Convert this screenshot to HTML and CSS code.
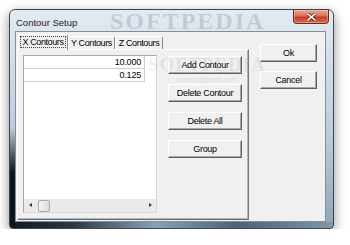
FILE: index.html
```html
<!DOCTYPE html>
<html lang="en">
<head>
  <meta charset="UTF-8">
  <title>Contour Setup</title>
  <link rel="stylesheet" href="styles.css">
</head>
<body>
  <div class="window">
    <div class="titlebar">
      <span class="title">Contour Setup</span>
      <span class="mark-title">SOFTPEDIA</span>
      <button class="close" aria-label="Close">
        <svg width="9" height="8" viewBox="0 0 9 8">
          <path d="M1 1 L8 7 M8 1 L1 7" stroke="#4a1a12" stroke-width="3" stroke-linecap="square"/>
          <path d="M1 1 L8 7 M8 1 L1 7" stroke="#ffffff" stroke-width="1.6" stroke-linecap="square"/>
        </svg>
      </button>
    </div>
    <div class="client">
      <div class="tabs">
        <div class="tab-strip">
          <div class="tab active"><span class="focus">X Contours</span></div>
          <div class="tab tab-y">Y Contours</div>
          <div class="tab tab-z">Z Contours</div>
        </div>
        <div class="tab-panel">
          <div class="list">
            <div class="rows">
              <div class="row">10.000</div>
              <div class="row">0.125</div>
            </div>
            <div class="hscroll">
              <span class="arrow left"></span>
              <span class="thumb"></span>
              <span class="track"></span>
              <span class="arrow right"></span>
            </div>
          </div>
          <div class="actions">
            <button class="btn">Add Contour</button>
            <button class="btn">Delete Contour</button>
            <button class="btn">Delete All</button>
            <button class="btn">Group</button>
          </div>
        </div>
      </div>
      <div class="dialog-buttons">
        <button class="btn small">Ok</button>
        <button class="btn small">Cancel</button>
      </div>
      <div class="mark-client">
        <span class="mark-big">SOFTPEDIA</span>
        <span class="mark-url">www.softpedia.com</span>
      </div>
    </div>
  </div>
</body>
</html>
```

FILE: styles.css
```css
body {
  margin: 0;
  background-color: #ffffff;
  font-family: "Liberation Sans", Arial, sans-serif;
}
.window {
  box-sizing: border-box;
  width: 325px;
  height: 220px;
  margin: 9px 0 0 9px;
  padding: 0 7px 6px 5px;
  border: 1px solid #3d4752;
  border-radius: 6px 6px 4px 4px;
  box-shadow: 0 4px 12px rgba(0, 0, 0, 0.45);
  background:
    linear-gradient(to bottom, rgba(10, 12, 16, 0), #101418 45%) left bottom / 5px 100px no-repeat,
    linear-gradient(to right, #14181d 0, #2e3a46 20%, #8aa1b5 45%, #4d6275 70%, #7f95a8 100%) left bottom / 100% 6px no-repeat,
    linear-gradient(to bottom, #e4eaf0 0, #d6dfe8 20%, #bccad7 60%, #8fa4b7 100%);
}
.titlebar {
  position: relative;
  display: flex;
  align-items: flex-start;
  height: 21px;
}
.title {
  padding: 7px 0 0 1px;
  font-size: 9.5px;
  color: #1b1b1b;
}
.mark-title {
  position: absolute;
  left: 95px;
  top: -2px;
  font-family: "Liberation Serif", serif;
  font-weight: bold;
  font-size: 24px;
  letter-spacing: 2px;
  color: rgba(80, 102, 125, 0.22);
}
.close {
  display: flex;
  align-items: center;
  justify-content: center;
  width: 36px;
  height: 14px;
  margin: 0 -3px 0 auto;
  padding: 0;
  border: 1px solid #6a2c20;
  border-top: none;
  border-radius: 0 0 4px 4px;
  background: linear-gradient(to bottom, #e9a99a 0, #d7705a 45%, #c0402a 55%, #d56a4c 100%);
  box-shadow: inset 0 0 0 1px rgba(255, 200, 190, 0.45);
}
.client {
  position: relative;
  box-sizing: border-box;
  display: flex;
  height: 191px;
  padding: 2px 0 0 1px;
  border: 1px solid #7e8f9f;
  background-color: #f0f0f0;
}
.tabs {
  display: flex;
  flex-direction: column;
  width: 232px;
}
.tab-strip {
  display: flex;
  align-items: flex-end;
  height: 15px;
  padding-left: 1px;
}
.tab {
  box-sizing: border-box;
  height: 13px;
  border-top: 1px solid #ffffff;
  border-left: 1px solid #ffffff;
  border-right: 1px solid #8a8a8a;
  border-radius: 2px 2px 0 0;
  font-size: 9px;
  letter-spacing: -0.4px;
  line-height: 12px;
  text-align: center;
  color: #000000;
}
.tab.active {
  position: relative;
  width: 50px;
  height: 16px;
  margin-bottom: -1px;
  padding-top: 1px;
  background-color: #f0f0f0;
}
.focus {
  padding: 0 1px;
  outline: 1px dotted #444444;
  outline-offset: 0;
}
.tab-y {
  width: 47px;
}
.tab-z {
  width: 48px;
}
.tab-panel {
  box-sizing: border-box;
  display: flex;
  height: 171px;
  padding: 5px 0 0 5px;
  border-top: 1px solid #ffffff;
  border-left: 1px solid #ffffff;
  border-right: 1px solid #7a7a7a;
  border-bottom: 1px solid #6a6a6a;
  box-shadow: inset -1px -1px 0 #b4b4b4;
}
.list {
  box-sizing: border-box;
  display: flex;
  flex-direction: column;
  width: 134px;
  height: 158px;
  border: 1px solid #a7a7a7;
  border-right-color: #d8d8d8;
  border-bottom-color: #d8d8d8;
  background-color: #ffffff;
}
.rows {
  flex: 1;
}
.row {
  box-sizing: border-box;
  width: 121px;
  height: 13px;
  padding-right: 3px;
  border-bottom: 1px solid #cfcfcf;
  border-right: 1px solid #cfcfcf;
  font-size: 9px;
  line-height: 13px;
  text-align: right;
  letter-spacing: -0.2px;
}
.hscroll {
  display: flex;
  align-items: center;
  height: 13px;
  background-color: #eaeaea;
}
.arrow {
  width: 13px;
  height: 13px;
  position: relative;
}
.arrow::after {
  content: "";
  position: absolute;
  top: 4px;
  border-top: 2.5px solid transparent;
  border-bottom: 2.5px solid transparent;
}
.arrow.left::after {
  left: 5px;
  border-right: 3px solid #3a3a3a;
}
.arrow.right::after {
  left: 6px;
  border-left: 3px solid #3a3a3a;
}
.thumb {
  box-sizing: border-box;
  width: 12px;
  height: 12px;
  margin-left: 1px;
  border: 1px solid #a9a9a9;
  border-radius: 2px;
  background: linear-gradient(to right, #f6f6f6, #dcdcdc);
}
.track {
  flex: 1;
}
.actions {
  display: flex;
  flex-direction: column;
  gap: 10px;
  width: 74px;
  margin-left: 11px;
  padding-top: 1px;
}
.btn {
  box-sizing: border-box;
  height: 18px;
  padding: 0;
  border: 1px solid;
  border-color: #ffffff #5f5f5f #5f5f5f #ffffff;
  box-shadow: inset -1px -1px 0 #a8a8a8;
  background-color: #f0f0f0;
  font-family: "Liberation Sans", Arial, sans-serif;
  font-size: 9px;
  letter-spacing: -0.3px;
  color: #000000;
}
.dialog-buttons {
  display: flex;
  flex-direction: column;
  gap: 9px;
  width: 57px;
  margin-left: 11px;
  padding-top: 10px;
}
.mark-client {
  position: absolute;
  left: 132px;
  top: 22px;
  display: flex;
  flex-direction: column;
  align-items: center;
  pointer-events: none;
}
.mark-big {
  font-family: "Liberation Serif", serif;
  font-weight: bold;
  font-size: 19px;
  letter-spacing: 1px;
  color: rgba(150, 150, 150, 0.16);
}
.mark-url {
  font-size: 7px;
  color: rgba(140, 140, 140, 0.25);
}
```
